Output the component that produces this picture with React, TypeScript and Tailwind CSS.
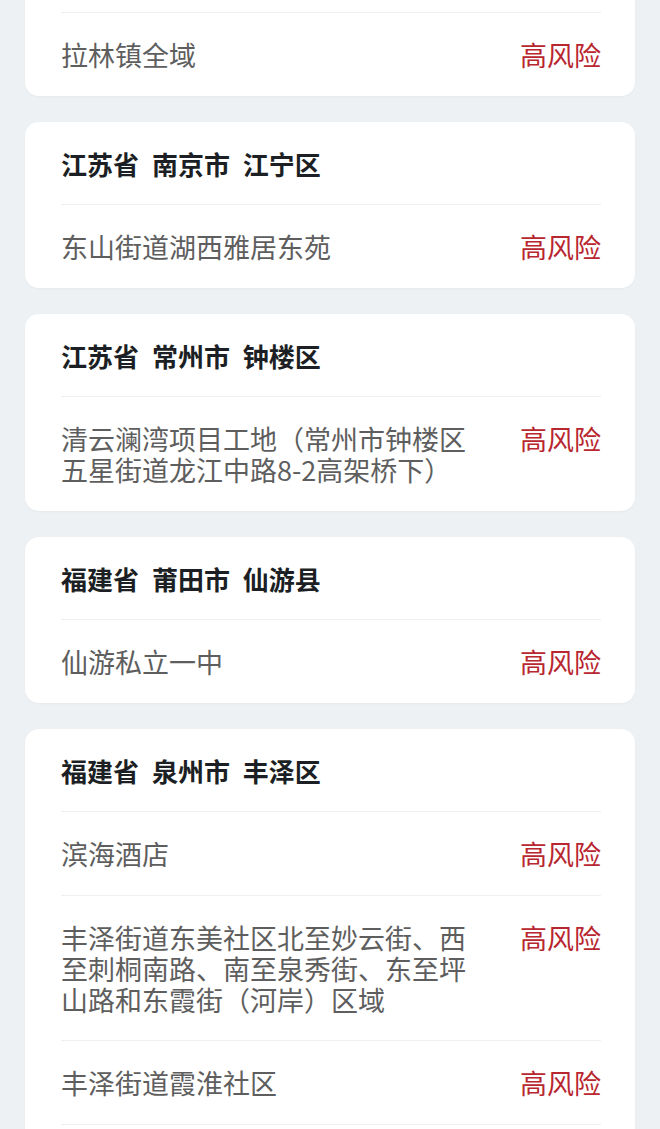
type Row = { place: string; level: string };
type Area = { title?: string; rows: Row[]; cut?: boolean; more?: boolean };

const areas: Area[] = [
  { title: "", rows: [{ place: "拉林镇全域", level: "高风险" }], cut: true },
  { title: "江苏省 南京市 江宁区", rows: [{ place: "东山街道湖西雅居东苑", level: "高风险" }] },
  {
    title: "江苏省 常州市 钟楼区",
    rows: [{ place: "清云澜湾项目工地（常州市钟楼区五星街道龙江中路8-2高架桥下）", level: "高风险" }],
  },
  { title: "福建省 莆田市 仙游县", rows: [{ place: "仙游私立一中", level: "高风险" }] },
  {
    title: "福建省 泉州市 丰泽区",
    rows: [
      { place: "滨海酒店", level: "高风险" },
      { place: "丰泽街道东美社区北至妙云街、西至刺桐南路、南至泉秀街、东至坪山路和东霞街（河岸）区域", level: "高风险" },
      { place: "丰泽街道霞淮社区", level: "高风险" },
    ],
    more: true,
  },
];

export default function App() {
  return (
    <div
      className="h-[1129px] overflow-hidden bg-[#eef1f4] px-[25px]"
      style={{ fontFamily: '"Noto Sans CJK SC", "Noto Sans", sans-serif' }}
    >
      <div className="flex flex-col gap-[26.5px]">
        {areas.map((a, i) => (
          <div
            key={i}
            className={`rounded-[14px] bg-white pl-[36px] pr-[34px] shadow-[0_1px_3px_rgba(0,0,0,0.03)] ${a.cut ? "-mt-[70px]" : ""}`}
          >
            <div className="flex h-[82px] items-center text-[26px] font-bold leading-[31px] text-[#1c1f24] [word-spacing:7px]">
              {a.title}
            </div>
            {a.rows.map((r) => (
              <div key={r.place} className="flex items-start justify-between border-t border-[#eeeff1] pt-[26px] pb-[25.5px]">
                <div className="w-[420px] text-[27px] leading-[31px] text-[#5e5e5e]">{r.place}</div>
                <div className="text-[27px] leading-[31px] text-[#b8262f]">{r.level}</div>
              </div>
            ))}
            {a.more && <div className="h-[83px] border-t border-[#eeeff1]" />}
          </div>
        ))}
      </div>
    </div>
  );
}
